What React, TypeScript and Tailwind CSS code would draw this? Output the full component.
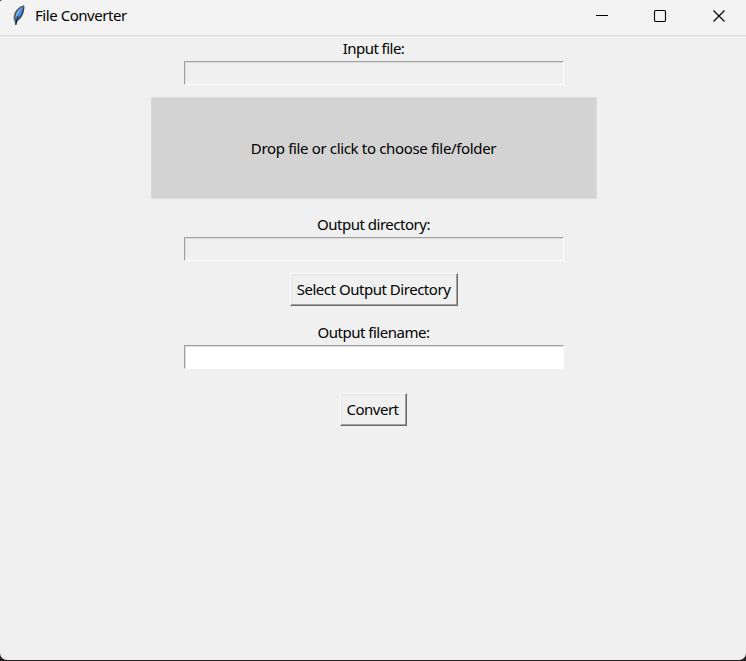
import React from "react";

const entryClass =
  "ml-px block h-6 w-[380px] rounded-none border border-t-[#a0a0a0] border-l-[#a0a0a0] border-r-white border-b-white shadow-[inset_1px_1px_0_#dddddd] outline-none";
const buttonClass =
  "flex h-[33px] items-center justify-center whitespace-nowrap border border-t-white border-l-white border-r-[#696969] border-b-[#696969] bg-[#f0f0f0] pb-px shadow-[inset_-1px_-1px_0_#a0a0a0,inset_1px_1px_0_#e3e3e3]";

function Feather() {
  return (
    <svg width="16" height="22" viewBox="0 0 16 22" className="ml-[11px] -mt-1.5">
      <path d="M13 1.8C8.6 2.3 4.7 6.2 3.5 10.5c-.8 2.8-.5 4.9.3 6.5L4.8 21l1.2-3.7c3.1-2.3 5.3-5.3 6.1-8.6.6-2.5 1-4.5.9-6.9Z" fill="#4d5965" stroke="#5d6266" strokeWidth=".8" />
      <path d="M12.3 2.8C8.3 4.3 4.9 8.4 4.2 13.2l.6 3.1c3.3-2.2 5.4-5 6.2-8.1.5-2 1-3.7 1.3-5.4Z" fill="#438bdc" />
      <path d="M11 3.8C7.2 5.8 4.9 9 4.6 13.4 6.5 10.2 8.7 7.2 11 3.8Z" fill="#8dbcec" />
      <path d="M7.2 12.2C6.2 14.2 5.3 16.7 4.8 20.8" fill="none" stroke="#17212d" strokeWidth="1.1" />
      <path d="m12.8 3.4-.8 4.4-1.5 3.5-3 3.9" fill="none" stroke="#26313e" strokeWidth=".8" />
    </svg>
  );
}

export default function App() {
  return (
    <div className="h-[661px] w-[746px] overflow-hidden bg-[#231f20] font-['Noto_Sans','Liberation_Sans',sans-serif] text-[15px] leading-5 text-black">
      <div className="flex h-[660px] flex-col overflow-hidden rounded-tl-[3px] rounded-b-[7px] bg-[#f0f0f0]">
        <header className="flex h-9 shrink-0 items-center border-b border-[#d9d9d9] bg-[#f3f3f3]">
          <Feather />
          <span className="ml-2 -mt-1.5 whitespace-nowrap tracking-[-0.45px]">File Converter</span>
          <div className="ml-auto flex h-full text-black">
            <svg width="58" height="35" viewBox="0 0 58 35" fill="none" stroke="currentColor"><path d="M23 15.5h12" /></svg>
            <svg width="58" height="35" viewBox="0 0 58 35" fill="none" stroke="currentColor"><rect x="23.5" y="10.5" width="11" height="11" rx="1.2" strokeWidth="1.2" /></svg>
            <svg width="57" height="35" viewBox="0 0 57 35" fill="none" stroke="currentColor"><path d="m24.5 10.5 11 11m0-11-11 11" strokeWidth="1.15" /></svg>
          </div>
        </header>
        <main className="flex flex-col items-center pl-px">
          <label htmlFor="input-file" className="mt-0.5 h-[23px] tracking-[-0.54px]">Input file:</label>
          <input id="input-file" readOnly className={`${entryClass} bg-[#f0f0f0]`} />
          <div className="mt-3 flex h-[102px] w-[446px] items-center justify-center border border-[#dbdbdb] bg-[#d3d3d3] tracking-[-0.34px]">
            Drop file or click to choose file/folder
          </div>
          <label htmlFor="output-directory" className="mt-[15px] h-[23px] tracking-[-0.48px]">Output directory:</label>
          <input id="output-directory" readOnly className={`${entryClass} bg-[#f0f0f0]`} />
          <button className={`${buttonClass} mt-3 w-[168px] tracking-[-0.47px]`}>Select Output Directory</button>
          <label htmlFor="output-filename" className="mt-4 h-[23px] tracking-[-0.48px]">Output filename:</label>
          <input id="output-filename" className={`${entryClass} bg-white`} />
          <button className={`${buttonClass} mt-6 w-[67px] pr-0.5 tracking-[-0.5px]`}>Convert</button>
        </main>
      </div>
    </div>
  );
}
